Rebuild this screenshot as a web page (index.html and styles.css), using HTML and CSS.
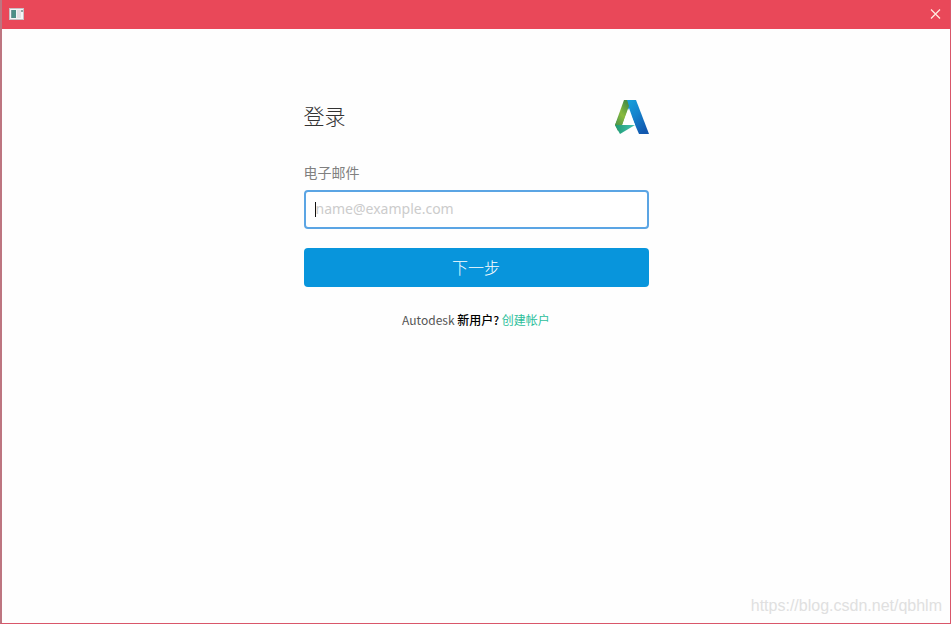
FILE: index.html
```
<!DOCTYPE html>
<html lang="zh-CN">
<head>
  <meta charset="UTF-8">
  <title>登录</title>
  <link rel="stylesheet" href="styles.css">
</head>
<body>
  <div class="window">
    <header class="titlebar">
      <svg class="app-icon" width="15" height="12" viewBox="0 0 15 12">
        <rect width="15" height="12" fill="#c9bfc4"/>
        <rect x="1" y="1" width="13" height="10" fill="#f3f5f6"/>
        <rect x="2" y="2" width="5" height="8" fill="#4d8f87"/>
        <rect x="2" y="2" width="1" height="8" fill="#77989c"/>
        <rect x="8" y="2" width="4" height="8" fill="#e6dfe4"/>
        <rect x="12" y="2" width="2" height="2" fill="#8fa5a3"/>
      </svg>
      <button class="close" type="button" aria-label="关闭">
        <svg width="11" height="10" viewBox="0 0 11 10">
          <path d="M1 0.5 L10 9.5 M10 0.5 L1 9.5" stroke="#ffece0" stroke-width="1.3"/>
        </svg>
      </button>
    </header>

    <main class="content">
      <form class="login">
        <div class="login-head">
          <h1>登录</h1>
          <svg class="logo" width="34" height="34" viewBox="0 0 34 34">
            <defs>
              <linearGradient id="green" x1="0.6" y1="0" x2="0.2" y2="1">
                <stop offset="0" stop-color="#4b8f45"/>
                <stop offset="0.45" stop-color="#8abb3c"/>
                <stop offset="1" stop-color="#3c8a4c"/>
              </linearGradient>
              <linearGradient id="blue" x1="0" y1="0" x2="0.7" y2="1">
                <stop offset="0" stop-color="#17a5dc"/>
                <stop offset="0.5" stop-color="#1583cd"/>
                <stop offset="1" stop-color="#1258ae"/>
              </linearGradient>
              <linearGradient id="teal" x1="0" y1="0" x2="1" y2="0">
                <stop offset="0" stop-color="#1f9a70"/>
                <stop offset="1" stop-color="#45c3b5"/>
              </linearGradient>
            </defs>
            <path d="M10 0 H21 L34 34 H24 L11 4 Z" fill="url(#blue)"/>
            <path d="M9 0 H12 L13 7 L7 25 H0 Z" fill="url(#green)"/>
            <path d="M12 0 L14 6 L7 25 L3 31 L0 25 Z" fill="url(#green)"/>
            <path d="M0 25 H20 L5 34 Z" fill="url(#teal)"/>
            <path d="M14 8 L20 25 H8 Z" fill="#fff"/>
          </svg>
        </div>

        <label for="email">电子邮件</label>
        <div class="field">
          <input id="email" type="email" placeholder="name@example.com">
          <span class="caret"></span>
        </div>

        <button class="next" type="submit">下一步</button>

        <p class="signup">Autodesk <strong>新用户?</strong> <a href="#">创建帐户</a></p>
      </form>
    </main>

    <footer class="watermark">https://blog.csdn.net/qbhlm</footer>
  </div>
</body>
</html>
```

FILE: styles.css
```
* {
  box-sizing: border-box;
}

body {
  margin: 0;
  font-family: "Noto Sans CJK SC", sans-serif;
  color: #333;
}

.window {
  display: flex;
  flex-direction: column;
  min-height: 100vh;
  background: #fefefe;
  border: 1px solid #d9566a;
  border-top: none;
  border-left: 2px solid #bd7580;
}

.titlebar {
  display: flex;
  justify-content: space-between;
  align-items: center;
  height: 29px;
  padding: 0 8px 1px 7px;
  background: #e94859;
}

.close {
  display: flex;
  padding: 1px;
  border: none;
  background: none;
}

.content {
  flex: 1;
  padding: 0 20px;
}

.login {
  max-width: 345px;
  margin: 0 auto;
  padding-top: 71px;
}

.login-head {
  display: flex;
  justify-content: space-between;
  align-items: flex-start;
  height: 34px;
  margin-bottom: 27px;
}

h1 {
  margin: 0;
  font-size: 21px;
  font-weight: 300;
  line-height: 30px;
}

label {
  display: block;
  margin-bottom: 7px;
  font-size: 14px;
  line-height: 22px;
  color: #808080;
}

.field {
  position: relative;
}

.field input {
  display: block;
  width: 100%;
  height: 39px;
  padding: 0 10px 2px;
  border: 2px solid #5ba5e4;
  border-radius: 4px;
  background: #fff;
  font-family: "Noto Sans", "Noto Sans CJK SC", sans-serif;
  font-size: 14px;
  outline: none;
}

.field input::placeholder {
  color: #ccc;
}

.caret {
  position: absolute;
  top: 12px;
  left: 11px;
  width: 1px;
  height: 15px;
  background: #111;
}

.next {
  display: block;
  width: 100%;
  height: 39px;
  margin-top: 19px;
  padding: 0 0 2px;
  border: none;
  border-radius: 4px;
  background: #0895dc;
  color: #fff;
  font-family: inherit;
  font-size: 16px;
  font-weight: 300;
}

.signup {
  margin: 22px 0 0;
  font-size: 12px;
  line-height: 22px;
  text-align: center;
  color: #555;
}

.signup strong {
  font-weight: 500;
  color: #000;
}

.signup a {
  color: #2dbe9b;
  text-decoration: none;
}

.watermark {
  padding: 0 8px 7px;
  font-family: "Liberation Sans", sans-serif;
  font-size: 16px;
  line-height: 20px;
  text-align: right;
  color: #e0e0e0;
}
```
